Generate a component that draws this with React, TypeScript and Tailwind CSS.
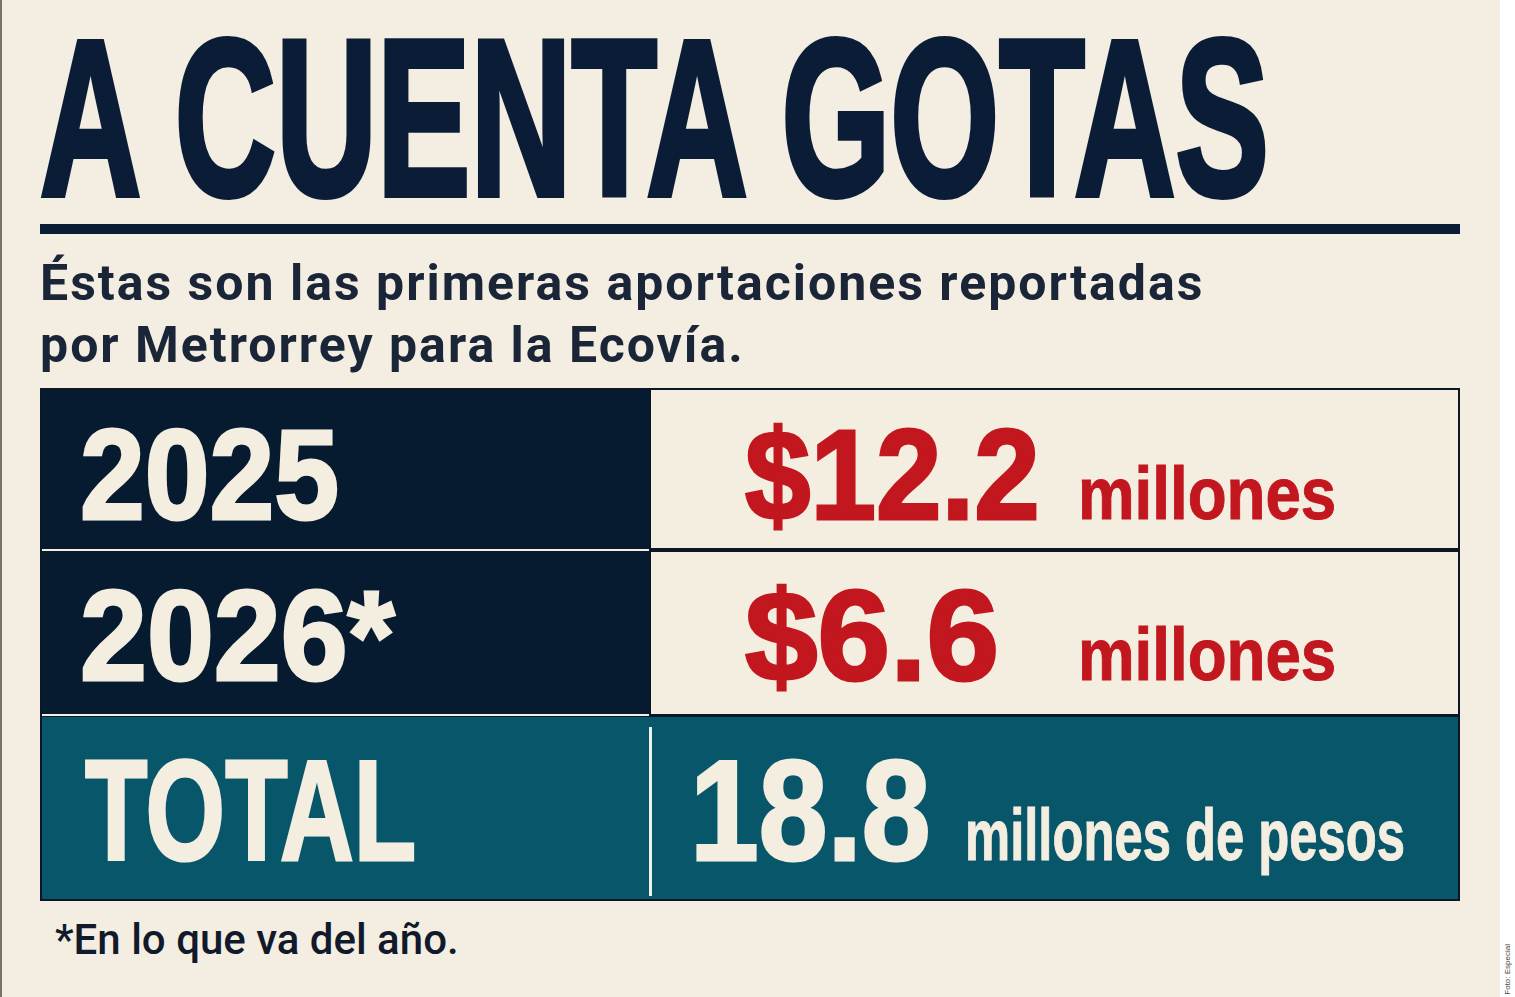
export default function App() {
  return (
    <div className="w-[1515px] h-[997px] flex bg-[#f4eee2] overflow-hidden">
      <div className="w-[1500px] shrink-0 h-full border-l-2 border-[#77726a] pl-[38px] flex flex-col">
        {/* Title */}
        <div className="h-[224px] shrink-0 pt-[15px]">
          <div className="w-max text-[140px] leading-[130px] text-[#0b1d36] font-['Liberation_Sans',Arial,sans-serif] font-bold whitespace-nowrap origin-top-left scale-y-[1.593] [-webkit-text-stroke:3.8px_#0b1d36]">
            A CUENTA GOTAS
          </div>
        </div>
        <div className="w-[1420px] h-[10px] shrink-0 bg-[#0b1d36]" />

        {/* Subtitle */}
        <div className="mt-[18px] text-[50px] leading-[62px] tracking-[2px] font-bold text-[#1b2538] font-['Roboto',sans-serif] whitespace-nowrap">
          <div>Éstas son las primeras aportaciones reportadas</div>
          <div>por Metrorrey para la Ecovía.</div>
        </div>

        {/* Table */}
        <div className="mt-[12px] w-[1420px] shrink-0 border-2 border-[#0b1627] bg-[#061a30] flex flex-col font-['Liberation_Sans',Arial,sans-serif] font-bold">
          {/* Row 1 */}
          <div className="flex h-[158px]">
            <div className="w-[607px] shrink-0 bg-[#061a30] pl-[38px] pt-[21px]">
              <div className="w-max text-[128px] leading-none text-[#f4eee1] whitespace-nowrap origin-left scale-x-[0.91] [-webkit-text-stroke:3px_#f4eee1]">
                2025
              </div>
            </div>
            <div className="flex-1 min-w-0 bg-[#f4eee1] border-l-2 border-[#0b1627] pl-[94px] pt-[21px] flex items-baseline">
              <div className="w-[333px] shrink-0">
                <div className="w-max text-[128px] leading-none text-[#c2171e] whitespace-nowrap origin-left scale-x-[0.92] [-webkit-text-stroke:3px_#c2171e]">
                  $12.2
                </div>
              </div>
              <div className="w-max text-[74px] leading-none text-[#c2171e] whitespace-nowrap origin-left scale-x-[0.86] [-webkit-text-stroke:1px_#c2171e]">
                millones
              </div>
            </div>
          </div>

          {/* Divider 1 */}
          <div className="flex h-[4px]">
            <div className="w-[607px] shrink-0 bg-[#061a30] pt-[1px]">
              <div className="h-[2px] bg-[#f4eee1]" />
            </div>
            <div className="flex-1 bg-[#0b1627]" />
          </div>

          {/* Row 2 */}
          <div className="flex h-[162px]">
            <div className="w-[607px] shrink-0 bg-[#061a30] pl-[38px] pt-[20px]">
              <div className="w-max text-[128px] leading-none text-[#f4eee1] whitespace-nowrap origin-left scale-x-[0.94] [-webkit-text-stroke:3px_#f4eee1]">
                2026*
              </div>
            </div>
            <div className="flex-1 min-w-0 bg-[#f4eee1] border-l-2 border-[#0b1627] pl-[94px] pt-[20px] flex items-baseline">
              <div className="w-[333px] shrink-0">
                <div className="w-max text-[128px] leading-none text-[#c2171e] whitespace-nowrap origin-left scale-x-[1.02] [-webkit-text-stroke:3px_#c2171e]">
                  $6.6
                </div>
              </div>
              <div className="w-max text-[74px] leading-none text-[#c2171e] whitespace-nowrap origin-left scale-x-[0.86] [-webkit-text-stroke:1px_#c2171e]">
                millones
              </div>
            </div>
          </div>

          {/* Divider 2 */}
          <div className="flex h-[3px]">
            <div className="w-[607px] shrink-0 bg-[#061a30]">
              <div className="h-[2px] bg-[#f4eee1]" />
            </div>
            <div className="flex-1 bg-[#0b1627]" />
          </div>

          {/* Row 3 */}
          <div className="flex h-[182px] bg-[#08566a]">
            <div className="w-[607px] shrink-0 pl-[43px] pt-[23px]">
              <div className="w-max text-[142px] leading-none text-[#f4eee1] whitespace-nowrap origin-left scale-x-[0.72] [-webkit-text-stroke:3px_#f4eee1]">
                TOTAL
              </div>
            </div>
            <div className="w-[3px] shrink-0 mt-[10px] mb-[3px] bg-[#eef0ea]" />
            <div className="flex-1 min-w-0 pl-[38px] pt-[23px] flex items-baseline">
              <div className="w-[275px] shrink-0">
                <div className="w-max text-[142px] leading-none text-[#f4eee1] whitespace-nowrap origin-left scale-x-[0.87] [-webkit-text-stroke:3px_#f4eee1]">
                  18.8
                </div>
              </div>
              <div className="w-max text-[72px] leading-none text-[#f4eee1] whitespace-nowrap origin-left scale-x-[0.705] [-webkit-text-stroke:1px_#f4eee1]">
                millones de pesos
              </div>
            </div>
          </div>
        </div>

        {/* Footnote */}
        <div className="mt-[15px] pl-[15px] text-[42px] leading-[48px] font-medium text-[#111a2b] font-['Roboto',sans-serif] whitespace-nowrap">
          *En lo que va del año.
        </div>
      </div>

      <div className="w-[15px] shrink-0 h-full bg-white flex flex-col justify-end items-center pb-[2px]">
        <span className="[writing-mode:vertical-rl] rotate-180 text-[8px] leading-none text-[#444] font-['Liberation_Sans',Arial,sans-serif] whitespace-nowrap">
          Foto: Especial
        </span>
      </div>
    </div>
  );
}
